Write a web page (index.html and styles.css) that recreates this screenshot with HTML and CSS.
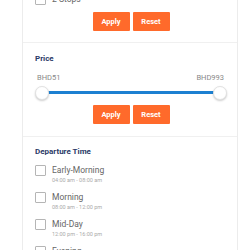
FILE: index.html
```html
<!DOCTYPE html>
<html>
  <head>
    <title>Flight Filters</title>
    <link rel="stylesheet" href="styles.css">
  </head>
  <body>
    <div class="filters">
      <div class="section stops">
        <label class="option">
          <span class="box"></span>
          <span class="text">
            <span class="name">2 Stops</span>
          </span>
        </label>
        <div class="actions">
          <button class="btn">Apply</button>
          <button class="btn">Reset</button>
        </div>
      </div>

      <div class="section price">
        <h3>Price</h3>
        <div class="range-labels">
          <span>BHD51</span>
          <span>BHD993</span>
        </div>
        <div class="slider">
          <span class="handle"></span>
          <span class="track"></span>
          <span class="handle"></span>
        </div>
        <div class="actions">
          <button class="btn">Apply</button>
          <button class="btn">Reset</button>
        </div>
      </div>

      <div class="section departure">
        <h3>Departure Time</h3>
        <label class="option">
          <span class="box"></span>
          <span class="text">
            <span class="name">Early-Morning</span>
            <span class="sub">04:00 am - 08:00 am</span>
          </span>
        </label>
        <label class="option">
          <span class="box"></span>
          <span class="text">
            <span class="name">Morning</span>
            <span class="sub">08:00 am - 12:00 pm</span>
          </span>
        </label>
        <label class="option">
          <span class="box"></span>
          <span class="text">
            <span class="name">Mid-Day</span>
            <span class="sub">12:00 pm - 16:00 pm</span>
          </span>
        </label>
        <label class="option">
          <span class="box"></span>
          <span class="text">
            <span class="name">Evening</span>
            <span class="sub">16:00 pm - 20:00 pm</span>
          </span>
        </label>
      </div>
    </div>
  </body>
</html>
```

FILE: styles.css
```css
body {
  margin: 0;
  background: #fff;
  font-family: Roboto, 'Liberation Sans', sans-serif;
  overflow: hidden;
}

.filters {
  margin: 0 12px 0 22px;
  border-left: 1px solid #ececec;
  border-right: 1px solid #ececec;
}

.section {
  padding: 0 10px 11px 12px;
  border-bottom: 1px solid #f0f0f0;
}

.stops {
  margin-top: -6px;
}

.price {
  padding-top: 10px;
  padding-bottom: 12px;
}

.departure {
  padding-top: 9px;
  border-bottom: none;
}

h3 {
  margin: 0;
  font-size: 8px;
  line-height: 12px;
  font-weight: 700;
  color: #2b3a67;
}

.option {
  display: flex;
  gap: 6px;
  margin-top: 7px;
}

.stops .option {
  margin-top: 0;
}

.box {
  flex: none;
  width: 9px;
  height: 9px;
  border: 1px solid #b5b5b5;
  border-radius: 1px;
  background: #fff;
}

.text {
  display: flex;
  flex-direction: column;
}

.name {
  font-size: 8.5px;
  line-height: 11px;
  color: #666;
}

.sub {
  font-size: 5.5px;
  line-height: 9px;
  color: #aaa;
}

.actions {
  display: flex;
  justify-content: center;
  gap: 3px;
  margin-top: 7px;
}

.btn {
  width: 37px;
  height: 19px;
  padding: 0;
  border: none;
  border-radius: 1px;
  background: #ff6a2b;
  color: #fff;
  font-family: Roboto, 'Liberation Sans', sans-serif;
  font-size: 7.5px;
  font-weight: 700;
}

.range-labels {
  display: flex;
  justify-content: space-between;
  margin-top: 7px;
  padding: 0 3px 0 2px;
  font-size: 7.5px;
  line-height: 12px;
  color: #888;
}

.slider {
  display: flex;
  align-items: center;
  height: 13px;
  margin-top: 2px;
}

.track {
  flex: 1;
  height: 3px;
  margin: 0 -6px;
  background: #1c80d1;
}

.handle {
  position: relative;
  z-index: 1;
  width: 12px;
  height: 12px;
  border-radius: 50%;
  background: #fff;
  border: 1px solid #e2e2e2;
  box-shadow: 0 1px 2px rgba(0, 0, 0, 0.2);
}

.price .actions {
  margin-top: 6px;
}
```
